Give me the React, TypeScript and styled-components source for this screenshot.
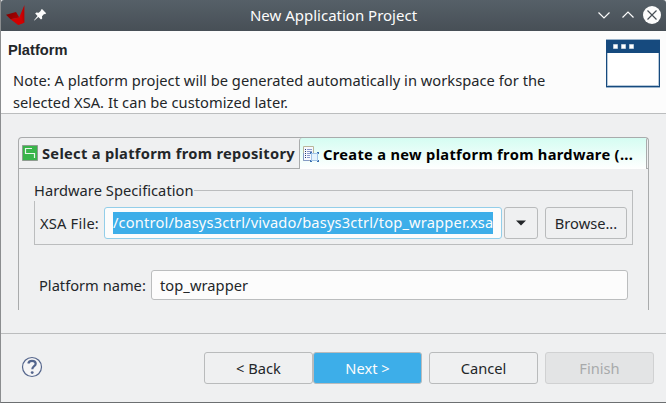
import React from "react";
import styled, { createGlobalStyle, css } from "styled-components";

const Global = createGlobalStyle`
  * { box-sizing: border-box; }
  body { margin: 0; background: #eff0f1; }
`;

const Window = styled.div`
  width: 666px;
  height: 403px;
  overflow: hidden;
  display: flex;
  flex-direction: column;
  background: #eff0f1;
  border-left: 1px solid #8b8d8f;
  border-bottom: 1px solid #6c6f71;
  color: #232629;
  font: 14.67px/22px "Noto Sans", sans-serif;
  white-space: nowrap;
`;

const TitleBar = styled.header`
  height: 31px;
  flex: none;
  display: grid;
  grid-template-columns: 80px 1fr 80px;
  align-items: center;
  color: #fcfcfc;
  background: linear-gradient(#566068, #474f56);
  border-radius: 3px 3px 0 0;
`;

const TitleIcons = styled.div`
  display: flex;
  height: 31px;
`;

const Title = styled.h1`
  margin: 0;
  padding-bottom: 2px;
  font-size: 15px;
  line-height: 22px;
  font-weight: 400;
  text-align: center;
`;

const Heading = styled.section`
  height: 83px;
  flex: none;
  display: flex;
  justify-content: space-between;
  background: #fcfcfc;
  border-bottom: 1px solid #bbbdbe;
  padding: 8px 6px 0 7px;
`;

const HeadingTitle = styled.h2`
  margin: 0;
  font: bold 14.67px/22px "Liberation Sans", sans-serif;
`;

const Note = styled.p`
  margin: 8px 0 0 5px;
  letter-spacing: 0.03px;
`;

const Content = styled.main`
  height: 220px;
  flex: none;
  padding: 23px 17px 0;
  border-bottom: 1px solid #bbbdbe;
`;

const Folder = styled.div`
  height: 173px;
  border: 1px solid #a9abac;
  border-bottom: 0;
  border-radius: 4px 4px 0 0;
`;

const Tabs = styled.div`
  display: flex;
  height: 31px;
`;

const Tab = styled.div<{ $active?: boolean }>`
  height: 31px;
  width: ${(p) => (p.$active ? 347 : 280)}px;
  flex: none;
  display: flex;
  align-items: center;
  gap: ${(p) => (p.$active ? 3 : 4)}px;
  padding-left: 3px;
  font-weight: 700;
  letter-spacing: ${(p) => (p.$active ? 0.31 : 0.29)}px;
  ${(p) =>
    p.$active
      ? css`
          color: #000;
          background: linear-gradient(#d5fdf2, #fff);
          border-left: 1px solid #a9abac;
          border-top-left-radius: 3px;
        `
      : css`
          border-bottom: 1px solid #a9abac;
        `}
`;

const TabEnd = styled.div`
  flex: 1;
  border-left: 1px solid #a9abac;
  border-bottom: 1px solid #a9abac;
  border-top-left-radius: 3px;
`;

const Group = styled.fieldset`
  width: 599px;
  height: 66px;
  margin: 10px 0 0 15px;
  border: 1px solid #bbbdbe;
  padding: 6px 0 0 4px;
  min-width: 0;
`;

const Legend = styled.legend`
  margin-left: -5px;
  padding: 0;
  height: 22px;
  letter-spacing: 0.04px;
`;

const Row = styled.div<{ $top?: number; $left?: number }>`
  display: flex;
  align-items: center;
  padding-left: ${(p) => p.$left ?? 0}px;
  margin-top: ${(p) => p.$top ?? 0}px;
`;

const Label = styled.label<{ $width: number; $inset?: number; $spacing?: number }>`
  width: ${(p) => p.$width}px;
  flex: none;
  padding-left: ${(p) => p.$inset ?? 0}px;
  letter-spacing: ${(p) => p.$spacing ?? 0}px;
`;

const Field = styled.div<{ $width: number; $focus?: boolean }>`
  width: ${(p) => p.$width}px;
  height: ${(p) => (p.$focus ? 32 : 30)}px;
  flex: none;
  display: flex;
  align-items: center;
  padding: 0 0 ${(p) => (p.$focus ? 0 : 1)}px 8px;
  letter-spacing: 0.06px;
  background: #fcfcfc;
  border: 1px solid ${(p) => (p.$focus ? "#93cee9" : "#bbbdbe")};
  border-radius: 3px;
`;

const Selection = styled.span`
  background: #3daee9;
  color: #fcfcfc;
  width: 380px;
  height: 22px;
  line-height: 21px;
  letter-spacing: 0.17px;
`;

const Button = styled.button<{ $width: number; $gap?: number; $kind?: "primary" | "disabled" }>`
  width: ${(p) => p.$width}px;
  height: 32px;
  flex: none;
  margin: 0 0 0 ${(p) => p.$gap ?? 0}px;
  padding: 0;
  display: flex;
  align-items: center;
  justify-content: center;
  font: inherit;
  color: ${(p) => (p.$kind === "primary" ? "#fcfcfc" : p.$kind === "disabled" ? "#a8aaab" : "#232629")};
  background: ${(p) => (p.$kind === "primary" ? "#3daee9" : p.$kind === "disabled" ? "#e3e4e5" : "#eff0f1")};
  border: 1px solid ${(p) => (p.$kind === "disabled" ? "#d0d1d2" : "#b9bbbc")};
  border-radius: 3px;
`;

const Footer = styled.footer`
  display: flex;
  padding: 18px 0 0 20px;
`;

const HelpSlot = styled.div`
  width: 183px;
  padding-top: 4px;
`;

const WindowLogo = () => (
  <svg width="32" height="31" viewBox="0 0 32 31">
    <defs>
      <linearGradient id="wing" x1="0" x2="1" y1="0" y2=".5">
        <stop stopColor="#7d0000" />
        <stop offset="1" stopColor="#a80000" />
      </linearGradient>
      <linearGradient id="blade" x1="0" x2="1">
        <stop stopColor="#e60008" />
        <stop offset="1" stopColor="#b80000" />
      </linearGradient>
    </defs>
    <path d="M5 14.7L15 12L18.3 17.5L9.5 19.3Z" fill="url(#wing)" />
    <path d="M18.2 17.5L23.4 5V22.6L17.2 25Z" fill="url(#blade)" />
    <path d="M9.5 19.3L18.3 17.5L23.4 22.6L17.2 25Z" fill="#d20000" />
  </svg>
);

const Pin = () => (
  <svg width="14" height="31" viewBox="0 0 14 31">
    <path
      d="M9 9L13.2 13.2L12 14.3L11.1 14L9 16.2L9.2 18.4L8 19.4L5.4 17L1.4 20.6L1 20.2L4.5 16L2.2 13.6L3.3 12.6L5.7 12.8L7.9 10.8L7.8 10Z"
      fill="#fcfcfc"
    />
  </svg>
);

const Controls = () => (
  <svg width="80" height="31" viewBox="586 0 80 31" fill="none" stroke="#fcfcfc" strokeWidth="1.2">
    <path d="M598.5 12.5L604 18L609.5 12.5M622.5 17.5L628 12L633.5 17.5" />
    <circle cx="652" cy="15" r="9" fill="#fcfcfc" stroke="none" />
    <path d="M647.5 10.5L656.5 19.5M656.5 10.5L647.5 19.5" stroke="#474f56" />
  </svg>
);

const WizardArt = () => (
  <svg width="54" height="49" viewBox="0 0 54 49">
    <path d="M0 0H54V49H0Z" fill="#9bb4cc" />
    <path d="M0 1H54V48H0Z" fill="#164a7e" />
    <path d="M1 14H53V47H1Z" fill="#b7c9da" />
    <path d="M2 14H52V46H2Z" fill="#fff" />
    <path d="M7 5h5v5H7zM15 5h5v5h-5zM23 5h5v5h-5z" fill="#7998b7" />
    <path d="M7.5 5.5h4v4h-4zM15.5 5.5h4v4h-4zM23.5 5.5h4v4h-4z" fill="#fff" />
  </svg>
);

const RepoIcon = () => (
  <svg width="16" height="16" viewBox="0 0 16 16">
    <path d="M.5.5h15v15H.5z" fill="#39b54a" stroke="#8f9b90" />
    <path d="M10 3.5H3.5V8.5H12.5V13" fill="none" stroke="#e9f7eb" strokeWidth="1.2" />
  </svg>
);

const HardwareIcon = () => (
  <svg width="17" height="16" viewBox="0 0 17 16">
    <path d="M.5.5h10v14H.5z" fill="#f7f8ff" stroke="#b9b69b" />
    <path d="M.5 7v7.5h6" fill="none" stroke="#859bc5" />
    <path d="M2 3.5h1M2 5.5h1M2 7.5h1M2 9.5h1M2 11.5h1" stroke="#283c70" />
    <path d="M4 3.5h5M4 5.5h5M4 7.5h3M4 9.5h3M4 11.5h3" stroke="#8b9acb" />
    <path d="M8.5 7.5h6v6h-6z" fill="#d9edfb" stroke="#8db2da" />
    <path d="M7 6h2v2H7zM14 6h2v2h-2zM7 14h2v2H7zM14 14h2v2h-2z" fill="#3d70af" />
    <path d="M8 7h7v8H8z" fill="#a4c6e8" />
    <path d="M9 8h5v6H9z" fill="#e6f4fd" />
  </svg>
);

const Arrow = () => (
  <svg width="10" height="6" viewBox="0 0 10 6">
    <path d="M0 .5H10L5 5.5Z" fill="#232629" />
  </svg>
);

const Help = () => (
  <svg width="22" height="22" viewBox="0 0 22 22" fill="none">
    <circle cx="11" cy="11" r="9.5" fill="#f5f5f6" stroke="#56678d" strokeWidth="1.2" />
    <path d="M7.3 7.4C7.8 5.3 9.2 4.8 11 4.8C13.4 4.8 14.7 6 14.7 7.8C14.7 10.3 11.3 10.2 11.3 13.3" stroke="#53658d" strokeWidth="2.2" />
    <circle cx="11.2" cy="16.6" r="1.45" fill="#53658d" />
  </svg>
);

export default function App() {
  return (
    <>
      <Global />
      <Window>
        <TitleBar>
          <TitleIcons>
            <WindowLogo />
            <Pin />
          </TitleIcons>
          <Title>New Application Project</Title>
          <Controls />
        </TitleBar>
        <Heading>
          <div>
            <HeadingTitle>Platform</HeadingTitle>
            <Note>
              Note: A platform project will be generated automatically in workspace for the
              <br />
              selected XSA. It can be customized later.
            </Note>
          </div>
          <WizardArt />
        </Heading>
        <Content>
          <Folder>
            <Tabs>
              <Tab><RepoIcon />Select a platform from repository</Tab>
              <Tab $active><HardwareIcon />Create a new platform from hardware (...</Tab>
              <TabEnd />
            </Tabs>
            <Group>
              <Legend>Hardware Specification</Legend>
              <Row>
                <Label $width={65} $inset={1} $spacing={0.2}>XSA File:</Label>
                <Field $width={398} $focus>
                  <Selection>/control/basys3ctrl/vivado/basys3ctrl/top_wrapper.xsa</Selection>
                </Field>
                <Button $width={34} $gap={2} aria-label="Recent files"><Arrow /></Button>
                <Button $width={82} $gap={7}>Browse...</Button>
              </Row>
            </Group>
            <Row $top={25} $left={20}>
              <Label $width={112}>Platform name:</Label>
              <Field $width={477}>top_wrapper</Field>
            </Row>
          </Folder>
        </Content>
        <Footer>
          <HelpSlot><Help /></HelpSlot>
          <Button $width={109}>&lt; Back</Button>
          <Button $width={109} $kind="primary">Next &gt;</Button>
          <Button $width={109} $gap={7}>Cancel</Button>
          <Button $width={109} $gap={7} $kind="disabled">Finish</Button>
        </Footer>
      </Window>
    </>
  );
}
